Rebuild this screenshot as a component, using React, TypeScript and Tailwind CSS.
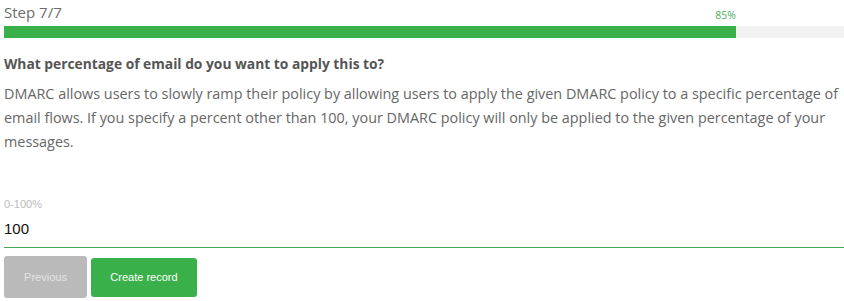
export default function App() {
  return (
    <div className="w-[844px] h-[301px] bg-white pl-1 overflow-hidden font-['Open_Sans',sans-serif]">
      <div className="pt-[2px] text-[15px] leading-[20px] text-[#6b6b6b]">Step 7/7</div>
      <div className="relative">
        <div className="absolute right-[108px] -top-[17px] text-[10.5px] leading-[12px] text-[#4cae5b]">85%</div>
        <div className="mt-[4px] h-[12px] w-full bg-[#f2f2f2]">
          <div className="h-full bg-[#39b04a]" style={{ width: 732 }} />
        </div>
      </div>
      <h2 className="mt-[16px] text-[13.8px] leading-[20px] font-bold text-[#555]">
        What percentage of email do you want to apply this to?
      </h2>
      <p className="mt-[8px] pr-1 text-[14.4px] leading-[24px] text-[#666]">
        DMARC allows users to slowly ramp their policy by allowing users to apply the given DMARC policy to a specific
        percentage of email flows. If you specify a percent other than 100, your DMARC policy will only be applied to the
        given percentage of your messages.
      </p>
      <div className="mt-[44px] text-[11px] leading-[12px] text-[#bbbbbb] font-['Liberation_Sans',sans-serif]">
        0-100%
      </div>
      <div className="mt-[10px] pb-[9px] text-[15px] leading-[18px] text-[#111] font-['Liberation_Sans',sans-serif]">
        100
      </div>
      <div className="h-px w-full bg-[#48a855]" />
      <div className="mt-[8px] flex items-center gap-[4px] font-['Liberation_Sans',sans-serif] text-[11px]">
        <button className="h-[42px] w-[83px] rounded-[3px] bg-[#bababa] text-[#e4e4e4]">Previous</button>
        <button className="h-[39px] w-[106px] rounded-[3px] bg-[#39b04a] text-white">Create record</button>
      </div>
    </div>
  )
}
